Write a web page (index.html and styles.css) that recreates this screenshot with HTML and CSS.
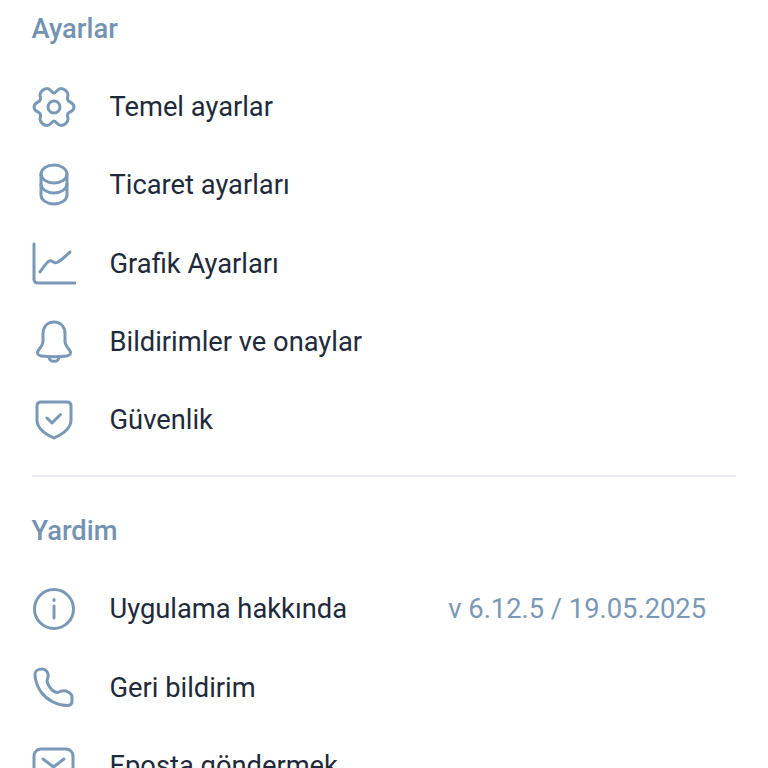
FILE: index.html
```html
<!DOCTYPE html>
<html lang="en">
<head>
    <meta charset="UTF-8">
    <meta name="viewport" content="width=device-width, initial-scale=1.0">
    <title>Ayarlar</title>
    <link rel="stylesheet" href="styles.css">
</head>
<body>
    <main class="page">
        <section class="group">
            <h2 class="group-title">Ayarlar</h2>
            <div class="row">
                <svg class="icon" viewBox="0 0 44 44"><path d="M22 8C24 8 25.500 3.500 29 3.500C32.500 3.500 36 7 36 10C36 12.500 34.500 13.500 36 15.500C37.500 17.500 42 17.500 42 22C42 26.500 37.500 26.500 36 28.500C34.500 30.500 36 31.500 36 34C36 37 32.500 40.500 29 40.500C25.500 40.500 24 36 22 36C20 36 18.500 40.500 15 40.500C11.500 40.500 8 37 8 34C8 31.500 9.500 30.500 8 28.500C6.500 26.500 2 26.500 2 22C2 17.500 6.500 17.500 8 15.500C9.500 13.500 8 12.500 8 10C8 7 11.500 3.500 15 3.500C18.500 3.500 20 8 22 8Z"/><circle cx="22" cy="22" r="6"/></svg>
                <span class="label">Temel ayarlar</span>
            </div>
            <div class="row">
                <svg class="icon" viewBox="0 0 44 44"><ellipse cx="22" cy="11" rx="13" ry="9"/><path d="M9 11v21c0 5 6 9 13 9s13-4 13-9V11"/><path d="M9 21c0 5 6 9 13 9s13-4 13-9"/></svg>
                <span class="label">Ticaret ayarları</span>
            </div>
            <div class="row">
                <svg class="icon" viewBox="0 0 44 44"><path d="M2 2v35c0 2.500 1.500 4 4 4h37"/><path d="M8 30c3-4 6-9 9-11 3-1.500 5 3 8 1.500 5-2.500 9-7 13-10.500"/></svg>
                <span class="label">Grafik Ayarları</span>
            </div>
            <div class="row">
                <svg class="icon" viewBox="0 0 44 44"><path d="M22 2c-7 0-11 5-11 12v7c0 4-2 6-4.500 9-2 2.500-1 5.500 2.500 6 8 1 18 1 26 0 3.500-.5 4.500-3.500 2.500-6-2.500-3-4.500-5-4.500-9v-7c0-7-4-12-11-12z"/><path d="M17 37.500c1 5 9 5 10 0"/></svg>
                <span class="label">Bildirimler ve onaylar</span>
            </div>
            <div class="row">
                <svg class="icon" viewBox="0 0 44 44"><path d="M9 4h26c2.500 0 4 1.500 4 4v14c0 8-8 14-17 18-9-4-17-10-17-18V8c0-2.500 1.500-4 4-4z"/><path d="M15 20l5 5 8.500-8.500"/></svg>
                <span class="label">Güvenlik</span>
            </div>
        </section>
        <hr class="divider">
        <section class="group">
            <h2 class="group-title">Yardim</h2>
            <div class="row">
                <svg class="icon" viewBox="0 0 44 44"><circle cx="22" cy="22" r="19.500"/><path d="M22 19v12"/><path d="M22 12.500v1"/></svg>
                <span class="label">Uygulama hakkında</span>
                <span class="value">v 6.12.5 / 19.05.2025</span>
            </div>
            <div class="row">
                <svg class="icon" viewBox="0 0 44 44"><path d="M3 8C3 5 6 3 10 3C13 3 15 5 16 8C17 11 15 13 15 15C15.500 18 17 21 20 24C23 26.500 25 27 27 26C29 25 31 24 34 25C37 26 40 28.500 40 31L40 35C40 38 38 39.500 35 39.500C25 39.500 15 34 9 26C5 20 3 14 3 8Z"/></svg>
                <span class="label">Geri bildirim</span>
            </div>
            <div class="row">
                <svg class="icon" viewBox="0 0 44 44"><rect x="2" y="5" width="39" height="34" rx="7"/><path d="M11 15l10.500 8 10.500-8"/></svg>
                <span class="label">Eposta göndermek</span>
            </div>
        </section>
    </main>
</body>
</html>
```
FILE: styles.css
```css
html, body {
    height: 100%;
    overflow: hidden;
}
body {
    margin: 0;
    background-color: #fff;
    font-family: Roboto, "Liberation Sans", sans-serif;
    font-size: 27.3px;
    color: #1e2a3b;
}
.page {
    padding: 8.5px 32px 0;
}
.group-title {
    margin: 0 0 0 -0.5px;
    height: 41px;
    line-height: 41px;
    font-size: 27.3px;
    font-weight: 500;
    color: #7393b3;
}
.row {
    display: flex;
    align-items: center;
    height: 78.25px;
    padding-right: 30px;
}
.group-title + .row {
    margin-top: 18.5px;
}
.icon {
    flex: none;
    width: 44px;
    height: 44px;
    margin-right: 33.5px;
    fill: none;
    stroke: #7a99b8;
    stroke-width: 3;
    stroke-linecap: round;
    stroke-linejoin: round;
}
.label {
    flex: 1;
    white-space: nowrap;
}
.value {
    color: #7a99b8;
    white-space: nowrap;
}
.divider {
    margin: 16px 0 33.5px;
    border: 0;
    height: 2px;
    background-color: #e6e9ee;
}
```
